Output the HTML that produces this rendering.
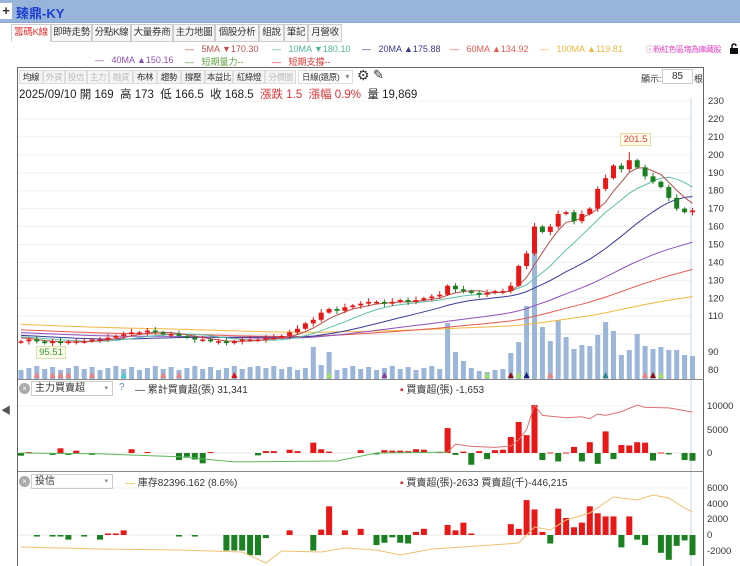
<!DOCTYPE html>
<html><head><meta charset="utf-8">
<style>
*{margin:0;padding:0;box-sizing:border-box}
body{width:740px;height:566px;overflow:hidden;background:#fff;font-family:"Liberation Sans","Noto Sans CJK TC",sans-serif;font-size:11px;color:#333;position:relative}
.abs{position:absolute;white-space:nowrap}
.top{left:0;top:0;width:740px;height:23px;background:#98b4d8;border-bottom:1px solid #8aa6cc}
.plus{left:0;top:3px;width:12px;height:16px;background:#fff;font-size:13px;font-weight:bold;line-height:16px;text-align:center;color:#333}
.title{left:16px;top:3px;font-size:13px;font-weight:bold;color:#1d3fd0}
.tab{position:absolute;top:24px;height:18px;border:1px solid #ccc;background:#f6f6f6;font-size:9.5px;line-height:16px;text-align:center;color:#333;white-space:nowrap;overflow:hidden;letter-spacing:-0.3px}
.lg{font-size:9px}
.tb{position:absolute;top:70px;height:14px;border:1px solid #ddd;background:#f4f4f4;font-size:8.5px;line-height:12px;text-align:center;color:#333;white-space:nowrap;overflow:hidden;letter-spacing:-0.4px}
.tb.g{color:#bbb}
</style></head><body>
<div class="abs top"></div>
<div class="abs plus">+</div>
<div class="abs title">臻鼎-KY</div>

<div class="tab" style="left:11px;width:40px;background:#fff;color:#e03030;border-bottom-color:#fff">籌碼K線</div>
<div class="tab" style="left:51px;width:41px">即時走勢</div>
<div class="tab" style="left:92px;width:39px">分點K線</div>
<div class="tab" style="left:131px;width:42px">大量券商</div>
<div class="tab" style="left:173px;width:42px">主力地圖</div>
<div class="tab" style="left:215px;width:44px">個股分析</div>
<div class="tab" style="left:259px;width:25px">組說</div>
<div class="tab" style="left:284px;width:24px">筆記</div>
<div class="tab" style="left:308px;width:34px">月營收</div>

<div class="abs lg" style="left:185px;top:44px;color:#c0504d">—&nbsp;&nbsp; 5MA ▼170.30</div>
<div class="abs lg" style="left:272px;top:44px;color:#4fb59a">—&nbsp;&nbsp; 10MA ▼180.10</div>
<div class="abs lg" style="left:362px;top:44px;color:#3a3a90">—&nbsp;&nbsp; 20MA ▲175.88</div>
<div class="abs lg" style="left:450px;top:44px;color:#e85a50">—&nbsp;&nbsp; 60MA ▲134.92</div>
<div class="abs lg" style="left:540px;top:44px;color:#f0b840">—&nbsp;&nbsp; 100MA ▲119.81</div>
<div class="abs" style="left:646px;top:44px;color:#e040c0;font-size:8px;letter-spacing:-0.5px">ⓘ粉紅色區塊為庫藏股</div>
<svg class="abs" style="left:729px;top:43px" width="11" height="11"><rect x="1" y="5" width="8" height="6" fill="#111"/><path d="M3 5V3a2 2 0 0 1 4 0" fill="none" stroke="#111" stroke-width="1.5"/></svg>
<div class="abs lg" style="left:95px;top:55px;color:#9050b0">—&nbsp;&nbsp; 40MA ▲150.16</div>
<div class="abs lg" style="left:185px;top:55px;color:#5aa040">—&nbsp;&nbsp; 短期量力--</div>
<div class="abs lg" style="left:272px;top:55px;color:#e03030">—&nbsp;&nbsp; 短期支撐--</div>

<div class="abs" style="left:17px;top:67px;width:687px;height:499px;border:1px solid #666;border-bottom:none"></div>
<div class="tb" style="left:19px;width:24px">均線</div>
<div class="tb g" style="left:43px;width:22px">外資</div>
<div class="tb g" style="left:65px;width:22px">投信</div>
<div class="tb g" style="left:87px;width:22px">主力</div>
<div class="tb g" style="left:109px;width:24px">融資</div>
<div class="tb" style="left:133px;width:24px">布林</div>
<div class="tb" style="left:157px;width:24px">趨勢</div>
<div class="tb" style="left:181px;width:24px">撐壓</div>
<div class="tb" style="left:205px;width:28px">本益比</div>
<div class="tb" style="left:233px;width:32px">紅綠燈</div>
<div class="tb g" style="left:265px;width:31px">分價圖</div>
<div class="tb" style="left:298px;width:55px;background:#fff;text-align:left;padding-left:3px">日線(還原)<span style="position:absolute;right:3px;color:#888;font-size:8px">▾</span></div>
<div class="abs" style="left:357px;top:67px;font-size:14px;color:#333">⚙</div>
<div class="abs" style="left:373px;top:67px;font-size:13px;color:#333">✎</div>
<div class="abs" style="left:641px;top:72px;font-size:9px">顯示:</div>
<div class="abs" style="left:662px;top:69px;width:31px;height:15px;border:1px solid #ccc;font-size:10px;text-align:center;line-height:13px">85</div>
<div class="abs" style="left:694px;top:72px;font-size:9px">根</div>
<div class="abs" style="left:19px;top:86px;font-size:11.5px;color:#222">2025/09/10 開 169&nbsp; 高 173&nbsp; 低 166.5&nbsp; 收 168.5&nbsp; <span style="color:#e03030">漲跌 1.5&nbsp; 漲幅 0.9%</span>&nbsp; 量 19,869</div>

<div class="abs" style="left:1px;top:402px;font-size:10px;color:#555">◀</div>

<svg id="c" class="abs" style="left:0;top:0" width="740" height="566"></svg>

<div class="abs" style="left:620px;top:133px;width:31px;height:13px;background:#fffbe6;border:1px solid #e6d8a0;color:#e04040;font-size:9.5px;text-align:center;line-height:11px">201.5</div>
<div class="abs" style="left:36px;top:346px;width:30px;height:13px;background:#fbfbe8;border:1px solid #dde0b0;color:#3a9a3a;font-size:9.5px;text-align:center;line-height:11px">95.51</div>

<div class="abs" style="left:19px;top:383px;width:11px;height:11px;border-radius:50%;background:#aaa;color:#fff;font-size:8px;text-align:center;line-height:11px">×</div>
<div class="abs" style="left:31px;top:381px;width:82px;height:15px;border:1px solid #ccc;font-size:10px;line-height:13px;padding-left:3px">主力買賣超<span style="position:absolute;right:4px;color:#888;font-size:7px">▾</span></div>
<div class="abs" style="left:119px;top:382px;font-size:10px;color:#6a8ac8">?</div>
<div class="abs" style="left:135px;top:381px;font-size:10px">—&nbsp;累計買賣超(張) 31,341</div>
<div class="abs" style="left:400px;top:381px;font-size:10px"><span style="color:#e02020">▪</span>&nbsp;買賣超(張) -1,653</div>

<div class="abs" style="left:19px;top:476px;width:11px;height:11px;border-radius:50%;background:#aaa;color:#fff;font-size:8px;text-align:center;line-height:11px">×</div>
<div class="abs" style="left:31px;top:474px;width:82px;height:15px;border:1px solid #ccc;font-size:10px;line-height:13px;padding-left:3px">投信<span style="position:absolute;right:4px;color:#888;font-size:7px">▾</span></div>
<div class="abs" style="left:125px;top:474px;font-size:10px"><span style="color:#f0b840">—</span>&nbsp;庫存82396.162 (8.6%)</div>
<div class="abs" style="left:400px;top:474px;font-size:10px"><span style="color:#e02020">▪</span>&nbsp;買賣超(張)-2633 買賣超(千)-446,215</div>

<script>
var S=document.getElementById('c'),h='';
function L(x1,y1,x2,y2,c,w){h+='<line x1="'+x1+'" y1="'+y1+'" x2="'+x2+'" y2="'+y2+'" stroke="'+c+'" stroke-width="'+(w||1)+'"/>';}
function R(x,y,w,hh,c){if(hh<0){y+=hh;hh=-hh}h+='<rect x="'+x+'" y="'+y+'" width="'+w+'" height="'+Math.max(hh,1)+'" fill="'+c+'"/>';}
function T(x,y,t){h+='<text x="'+x+'" y="'+y+'" font-size="9.5" fill="#333" font-family="Liberation Sans,sans-serif">'+t+'</text>';}
function P(pts,c,w){h+='<polyline fill="none" stroke="'+c+'" stroke-width="'+(w||1)+'" points="'+pts.join(' ')+'"/>';}
var X=function(i){return 21+7.9*i;};
var Y=function(p){return 370-(p-80)*1.793;};
for(var p=110;p<=230;p+=10){L(18,Y(p),691,Y(p),'#f0f0f0');T(708,Y(p)+3,p);}
T(708,Y(90)+3,90);T(708,Y(80)+3,80);
L(18,Y(100),691,Y(100),'#ddd');
L(691,98,691,566,'#c8d4e8');
var cl=[96,97,96,95,96,95,96,96,96,97,97,98,99,100,101,101,102,101,100,100,99,98,97,97,96,96,95,96,97,97,97,98,98,99,101,103,106,108,112,114,113,115,116,117,118,118,117,118,119,118,119,120,121,122,127,125,124,123,122,123,124,124,127,138,145,160,157,160,167,168,163,167,170,181,187,194,192,197,193,188,185,182,176,170,168,169];
var N=cl.length;
var vt=[];for(var i=0;i<N;i++)vt.push(370-((i*37)%5));
vt[37]=347;vt[39]=352;vt[30]=366;vt[38]=365;
var vr=[323,352,361,368,371,372,370,369,353,342,306,252,327,341,320,337,349,345,346,335,322,331,355,350,334,346,349,347,350,350,355,356];
for(var k=0;k<vr.length;k++)vt[N-vr.length+k]=vr[k];
for(i=0;i<N;i++)R(X(i)-2.5,vt[i],5,379-vt[i],'#9bb6d8');
var tri=[[2,'#f08080'],[4,'#f08080'],[5,'#f08080'],[6,'#f08080'],[9,'#f08080'],[13,'#40d0d0'],[18,'#f08080'],[20,'#f08080'],[27,'#e01010'],[39,'#a0e060'],[46,'#8040a0'],[59,'#a0e060'],[62,'#8a1010'],[63,'#a0e060'],[64,'#102080'],[67,'#f08080'],[74,'#2a8a8a'],[79,'#f08080'],[80,'#8a1010'],[81,'#a0e060']];
tri.forEach(function(t){var x=X(Math.round(t[0]));h+='<polygon points="'+(x-3)+',378 '+(x+3)+',378 '+x+',372" fill="'+t[1]+'"/>';});
var hist=[];for(i=0;i<100;i++)hist.push(113-i*0.15);
var all=hist.concat(cl);
function ma(n,c,w){var pts=[];for(var i=0;i<N;i++){var s=0;for(var j=0;j<n;j++)s+=all[100+i-j];pts.push(X(i).toFixed(1)+','+Y(s/n).toFixed(1));}P(pts,c,w||1);}
ma(100,'#f0b840');ma(60,'#e85a50');ma(40,'#9050c0');ma(20,'#3a3a9a');ma(10,'#5cc0a8');ma(5,'#b5504a');
for(i=0;i<N;i++){var o=i?cl[i-1]:96,c=cl[i];if(i%3==0&&Math.abs(c-o)<1){o=c-0.6}var up=c>=o;var col=up?'#e81818':'#1a8020';var hi=Math.max(o,c)+0.8+((i*7)%3)*0.6,lo=Math.min(o,c)-0.8-((i*5)%3)*0.5;
if(i==77)hi=201.5;
L(X(i),Y(hi),X(i),Y(lo),col);var t=Y(Math.max(o,c)),b=Y(Math.min(o,c));R(X(i)-2.5,t,5,Math.max(b-t,1.5),col);}
L(18,379.5,704,379.5,'#888');L(18,471.5,704,471.5,'#888');
var z2=453,s2=23.5/5000;
T(707,409,'10000');T(707,433,'5000');T(707,456,'0');
L(18,406,691,406,'#f0f0f0');L(18,z2,691,z2,'#e8e8e8');
var b2={0:-570,1:200,4:-400,5:1000,6:-400,7:500,9:-400,14:800,16:200,20:-1500,21:-800,22:-1400,23:-2200,24:200,30:-500,31:400,32:400,34:700,35:400,37:2200,38:800,39:300,43:600,45:-300,46:600,47:500,48:500,49:400,50:800,51:700,53:200,54:5300,55:-400,56:300,57:-2500,58:400,59:-1300,60:600,61:700,62:3400,63:6600,64:3800,65:10200,66:-1500,67:100,68:-1800,69:100,70:1300,71:-1800,72:2300,73:-2300,74:4600,75:-1300,76:1700,77:1600,78:2300,79:2200,80:-1600,81:100,82:-300,84:-1500,85:-1650};
for(var k in b2){var v=b2[k];R(X(+k)-3,z2,6,-v*s2,v>0?'#e81818':'#1a8020');}
var g2=[[0,0],[10,-200],[20,-800],[27,-1900],[40,-1700],[45,0],[54,200]].map(function(a){return X(a[0]).toFixed(1)+','+(z2-a[1]*s2).toFixed(1)});P(g2,'#5cb85c');
var r2=[[54,200],[55,1900],[57,1400],[60,1200],[62,1500],[63,2800],[64,5000],[65,10200],[66,8000],[69,7500],[71,7700],[72,7300],[73,8300],[74,8000],[76,8800],[78,10200],[79,9700],[82,9600],[85,8700]].map(function(a){return X(a[0]).toFixed(1)+','+(z2-a[1]*s2).toFixed(1)});P(r2,'#e07070');
var z3=535,s3=15.5/2000;
[['6000',488],['4000',504],['2000',519],['0',535],['-2000',551]].forEach(function(a){T(707,a[1]+3,a[0]);});
var b3={2:-200,4:-200,5:-200,6:-600,8:-200,10:-600,11:200,12:200,13:600,20:-200,22:-200,26:-2000,27:-2000,28:-2000,29:-2600,30:-2600,31:-400,34:600,37:-2000,38:700,39:3700,41:600,43:800,45:-1300,46:-1000,47:-300,48:-1000,49:-1100,50:400,51:800,54:1300,55:600,56:1600,57:200,62:1400,63:800,64:4500,65:3300,66:400,67:-1100,68:3400,69:2200,70:1000,71:1600,72:3700,73:2800,74:2400,75:2400,76:-1600,77:2400,78:-600,79:-1300,81:-2300,82:-3200,83:-1400,84:-700,85:-2600};
L(18,z3,691,z3,'#e8e8e8');L(18,488,691,488,'#f0f0f0');
for(k in b3){v=b3[k];R(X(+k)-3,z3,6,-v*s3,v>0?'#e81818':'#1a8020');}
var l3=[[0,547],[10,549],[20,550],[28,552],[31,563],[33,551],[38,552],[41,548],[45,550],[48,555],[52,549],[56,547],[63,543],[65,527],[67,530],[69,520],[72,513],[75,497],[78,500],[80,495],[82,498],[84,508],[85,512]].map(function(a){return X(a[0]).toFixed(1)+','+a[1]});P(l3,'#f0c070');
S.innerHTML=h;
</script>
</body></html>
